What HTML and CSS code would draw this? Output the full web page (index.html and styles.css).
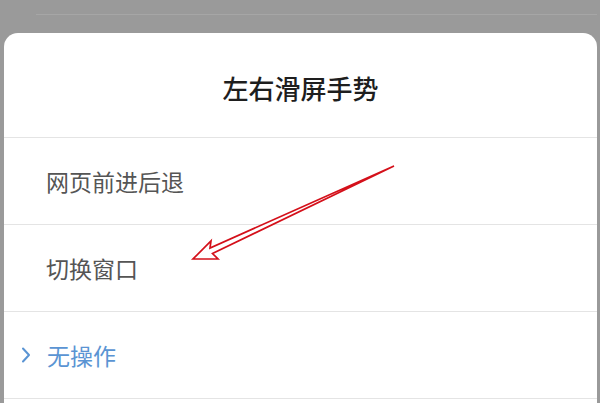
FILE: index.html
```html
<!DOCTYPE html>
<html lang="zh">
<head>
<meta charset="utf-8">
<title>左右滑屏手势</title>
<link rel="stylesheet" href="styles.css">
</head>
<body>
<div class="backdrop">
  <div class="topline"></div>
  <div class="sheet">
    <div class="sheet-title">左右滑屏手势</div>
    <div class="option">网页前进后退</div>
    <div class="option">切换窗口</div>
    <div class="option selected">
      <svg class="chev" width="10" height="16" viewBox="0 0 10 16"><path d="M2 1.5 L8 8 L2 14.5" fill="none" stroke="#5a94d3" stroke-width="2" stroke-linecap="round" stroke-linejoin="round"/></svg>
      <span>无操作</span>
    </div>
  </div>
</div>
<svg class="annot" width="600" height="403" viewBox="0 0 600 403">
  <polygon points="394,166 210,248 211,241 193,259 218,259 212.5,253.5" fill="#fff" stroke="#d4101a" stroke-width="1.7" stroke-linejoin="miter"/>
</svg>
</body>
</html>
```
FILE: styles.css
```css
html, body {
  margin: 0;
  padding: 0;
}
body {
  width: 600px;
  height: 403px;
  overflow: hidden;
  background: #9a9a9a;
  font-family: "Noto Sans CJK SC", "Noto Sans", sans-serif;
  position: relative;
}
.backdrop {
  padding: 14px 3px 0 4px;
}
.topline {
  height: 1px;
  margin-left: 32px;
  background: #a6a6a6;
  margin-bottom: 18px;
}
.sheet {
  background: #fff;
  border-radius: 14px 14px 0 0;
  height: 370px;
  overflow: hidden;
}
.sheet-title {
  height: 105px;
  box-sizing: border-box;
  padding-top: 5px;
  display: flex;
  align-items: center;
  justify-content: center;
  font-size: 26px;
  font-weight: 500;
  color: #1e1e1e;
  border-bottom: 1px solid #e4e4e4;
}
.option {
  height: 87px;
  box-sizing: border-box;
  display: flex;
  align-items: center;
  padding-left: 42px;
  font-size: 23px;
  color: #555;
  border-bottom: 1px solid #e4e4e4;
}
.option.selected {
  color: #5a94d3;
  padding-left: 17px;
}
.chev {
  margin-right: 16px;
}
.annot {
  position: absolute;
  left: 0;
  top: 0;
}
```
